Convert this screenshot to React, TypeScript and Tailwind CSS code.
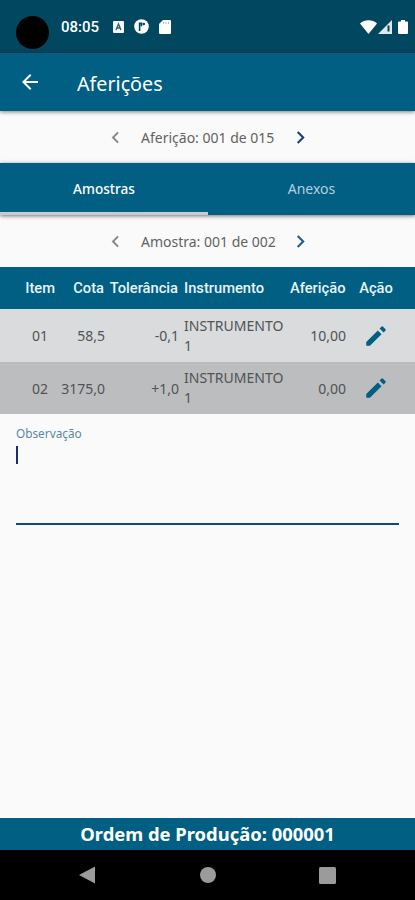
import type { ReactNode } from 'react';

type Row = {
  item: string;
  cota: string;
  tolerancia: string;
  instrumento: string;
  afericao: string;
};

const rows: Row[] = [
  { item: '01', cota: '58,5', tolerancia: '-0,1', instrumento: 'INSTRUMENTO 1', afericao: '10,00' },
  { item: '02', cota: '3175,0', tolerancia: '+1,0', instrumento: 'INSTRUMENTO 1', afericao: '0,00' },
];

const columns = 'grid grid-cols-[56px_49px_74px_111px_56px_60px] items-center';

const StatusBar = () => (
  <div className="flex h-[53px] shrink-0 items-center bg-[#00475f] pl-4 text-white">
    <div className="mt-[11px] size-[33px] rounded-full bg-black" />
    <span className="ml-3 mt-0.5 w-[39px] whitespace-nowrap font-['Roboto',sans-serif] text-[15px] font-medium leading-none">
      08:05
    </span>
    <svg className="ml-[13px] h-[12px] w-[11px]" viewBox="0 0 11 12">
      <rect width="11" height="12" rx="1" fill="#f4f8fa" />
      <path d="M3 9 5.5 3 8 9M4 7h3" fill="none" stroke="#36596b" strokeWidth="1.3" />
    </svg>
    <svg className="ml-[10px] size-[15px]" viewBox="0 0 15 15">
      <circle cx="7.5" cy="7.5" r="7.3" fill="#fff" />
      <path d="M5.6 12V4.4M4.8 4.4h2.7v2.8" fill="none" stroke="#00475f" strokeWidth="1.6" />
      <circle cx="9.8" cy="5" r="1.3" fill="#00475f" />
    </svg>
    <svg className="ml-[10px] h-[14px] w-[12px]" viewBox="0 0 12 14">
      <path d="M4 0h7a1 1 0 0 1 1 1v12a1 1 0 0 1-1 1H1a1 1 0 0 1-1-1V4z" fill="#fff" />
      <path d="M4.5 2v2M7 2v2M9.5 2v2" stroke="#a9bdc7" strokeWidth="1" />
    </svg>
    <div className="ml-auto flex items-center pr-[7px]">
      <svg className="h-[14px] w-[17px]" viewBox="0 0 17 14">
        <path d="M0 3.5C4.5-.9 12.5-.9 17 3.5L8.5 14z" fill="#fff" />
      </svg>
      <svg className="ml-px h-[14px] w-[14px]" viewBox="0 0 14 14">
        <path d="M14 0v14H0z" fill="#dfe8ec" />
        <path d="M10.5 5.5v6" stroke="#123f58" strokeWidth="2" />
      </svg>
      <svg className="ml-[6px] h-[14px] w-[10px]" viewBox="0 0 10 14">
        <path d="M3 0h4v1.5h2a1 1 0 0 1 1 1V13a1 1 0 0 1-1 1H1a1 1 0 0 1-1-1V2.5a1 1 0 0 1 1-1h2z" fill="#fff" />
      </svg>
    </div>
  </div>
);

const AppBar = () => (
  <header className="relative z-10 flex h-[58px] shrink-0 items-center bg-[#005f82] pl-[18px] text-white shadow-[0_1px_4px_rgba(0,0,0,0.5)]">
    <svg className="size-6" viewBox="0 0 24 24" fill="currentColor">
      <path d="M20 11H7.83l5.59-5.59L12 4l-8 8 8 8 1.41-1.41L7.83 13H20v-2z" />
    </svg>
    <h1 className="ml-[35px] mt-[3px] text-[19.7px] leading-none">Aferições</h1>
  </header>
);

const Chevron = ({ className, flip }: { className: string; flip?: boolean }) => (
  <svg className={className} viewBox="0 0 24 24" fill="currentColor">
    {flip ? (
      <path d="M10 6 8.59 7.41 13.17 12l-4.58 4.59L10 18l6-6z" />
    ) : (
      <path d="M15.41 7.41 14 6l-6 6 6 6 1.41-1.41L10.83 12z" />
    )}
  </svg>
);

const Pager = ({ children, next }: { children: ReactNode; next: string }) => (
  <div className="flex h-[52px] shrink-0 items-center pl-[104px] text-[14px] text-[#626262]">
    <Chevron className="size-[23px] text-[#858585]" />
    <span className="ml-[14px] w-[136px] whitespace-nowrap">{children}</span>
    <Chevron flip className={`ml-[11px] size-[25px] ${next}`} />
  </div>
);

const Tabs = () => (
  <div className="relative z-10 flex h-[52px] shrink-0 bg-[#005f82] text-[14px] shadow-[0_1px_4px_rgba(0,0,0,0.55)]">
    <div className="flex w-[208px] items-center justify-center border-b-[3px] border-[#c3cdd3] pt-[3px] text-[13.6px] font-medium text-white">
      Amostras
    </div>
    <div className="flex flex-1 items-center justify-center border-b-[3px] border-transparent pt-px text-[#b5d0dc]">
      Anexos
    </div>
  </div>
);

const Pencil = () => (
  <svg className="size-[26px] justify-self-center text-[#005f82]" viewBox="0 0 24 24" fill="currentColor">
    <path d="M3 17.6V21h3.4L17.1 10.3l-3.4-3.4zM20.6 7.1a1.1 1.1 0 0 0 0-1.6l-2.1-2.1a1.1 1.1 0 0 0-1.6 0L15.3 5l3.7 3.7z" />
  </svg>
);

const Table = () => (
  <div className="shrink-0">
    <div
      className={`${columns} h-[42px] whitespace-nowrap bg-[#005f82] text-right font-['Roboto',sans-serif] text-[14.7px] font-medium text-[#e8f3f8]`}
    >
      <span className="pr-px">Item</span>
      <span className="pr-px">Cota</span>
      <span className="pr-px">Tolerância</span>
      <span className="pl-[5px] text-left">Instrumento</span>
      <span className="pr-px">Aferição</span>
      <span className="text-center">Ação</span>
    </div>
    {rows.map((row) => (
      <div
        key={row.item}
        className={`${columns} h-[52.5px] pt-px text-right text-[14px] text-[#515355] odd:bg-[#bbbdbf] even:bg-[#d9dbdd]`}
      >
        <span className="pr-2">{row.item}</span>
        <span>{row.cota}</span>
        <span>{row.tolerancia}</span>
        <span className="pl-[5px] text-left leading-5">{row.instrumento}</span>
        <span>{row.afericao}</span>
        <Pencil />
      </div>
    ))}
  </div>
);

const App = () => {
  return (
    <div className="flex h-[900px] w-full flex-col overflow-hidden bg-[#fafafa] font-['Noto_Sans','Liberation_Sans',sans-serif]">
      <StatusBar />
      <AppBar />
      <Pager next="text-[#173f80]">Aferição: 001 de 015</Pager>
      <Tabs />
      <Pager next="text-[#1d5f88]">Amostra: 001 de 002</Pager>
      <Table />

      <div className="mx-4 mt-[11px] flex h-[100px] shrink-0 flex-col border-b-2 border-[#0b4d74]">
        <label className="text-[11.8px] leading-[17px] text-[#5d86a0]">Observação</label>
        <div className="mt-[4px] h-[18px] w-[2px] bg-[#152f6b]" />
      </div>

      <footer className="mt-auto flex h-8 shrink-0 items-center justify-center bg-[#005f82] text-[18.4px] font-bold text-white">
        Ordem de Produção: 000001
      </footer>
      <nav className="flex h-[50px] shrink-0 items-center bg-black pl-[79px] text-[#9b9b9b]">
        <svg className="h-[18px] w-4" viewBox="0 0 16 18" fill="currentColor">
          <path d="M16 .5v17L0 9z" />
        </svg>
        <div className="ml-[105px] size-4 rounded-full bg-current" />
        <div className="ml-[103px] size-[17px] rounded-[1.5px] bg-current" />
      </nav>
    </div>
  );
};

export default App;
